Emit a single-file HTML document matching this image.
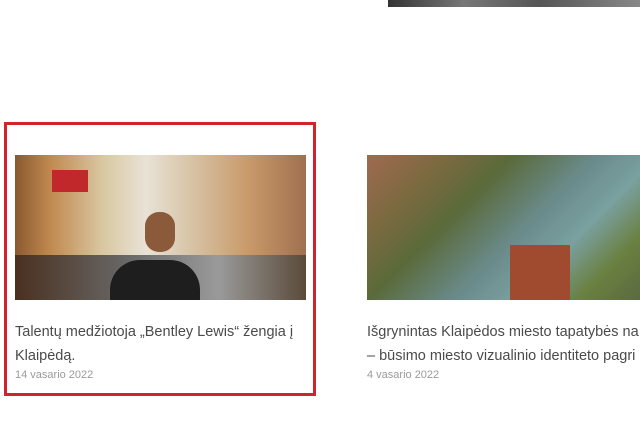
<!DOCTYPE html>
<html><head><meta charset="utf-8"><style>
body{margin:0;width:640px;height:422px;background:#fff;position:relative;overflow:hidden;font-family:"Liberation Sans",sans-serif}
.a{position:absolute}
.t{font-size:14.5px;color:#4a4a4a;line-height:24px;white-space:nowrap}
.d{font-size:11px;color:#9a9a9a}
</style></head><body>
<div class="a" style="left:388px;top:0;width:252px;height:7px;background:linear-gradient(90deg,#333,#777 30%,#555 60%,#888)"></div>
<div class="a" style="left:4px;top:122px;width:306px;height:268px;border:3px solid #d3222f"></div>
<div class="a" style="left:15px;top:155px;width:291px;height:145px;background:linear-gradient(90deg,#8a5a30 0%,#c08850 12%,#d9c7a0 30%,#e8e2d6 45%,#d8c4a8 60%,#c99a6a 80%,#a07050 100%)"></div>
<div class="a" style="left:15px;top:255px;width:291px;height:45px;background:linear-gradient(90deg,#4a3020,#6a6a6a 40%,#9a9a9a 70%,#5a4a3a)"></div>
<div class="a" style="left:52px;top:170px;width:36px;height:22px;background:#c0282c"></div>
<div class="a" style="left:110px;top:260px;width:90px;height:40px;background:#1e1e1e;border-radius:30px 30px 0 0"></div>
<div class="a" style="left:145px;top:212px;width:30px;height:40px;background:#8a5a3a;border-radius:14px"></div>
<div class="a" style="left:367px;top:155px;width:273px;height:145px;background:linear-gradient(135deg,#a06a50 0%,#7a6a40 20%,#5a6a3a 35%,#6a8a8a 55%,#7aa0a0 70%,#6a8040 85%,#5a6a40 100%)"></div>
<div class="a" style="left:510px;top:245px;width:60px;height:55px;background:#a04a30"></div>
<div class="a t" style="left:15px;top:320px">Talentų medžiotoja „Bentley Lewis“ žengia į</div>
<div class="a t" style="left:15px;top:344px">Klaipėdą.</div>
<div class="a d" style="left:15px;top:369px">14 vasario 2022</div>
<div class="a t" style="left:367px;top:320px">Išgrynintas Klaipėdos miesto tapatybės na</div>
<div class="a t" style="left:367px;top:344px">– būsimo miesto vizualinio identiteto pagri</div>
<div class="a d" style="left:367px;top:369px">4 vasario 2022</div>
</body></html>
